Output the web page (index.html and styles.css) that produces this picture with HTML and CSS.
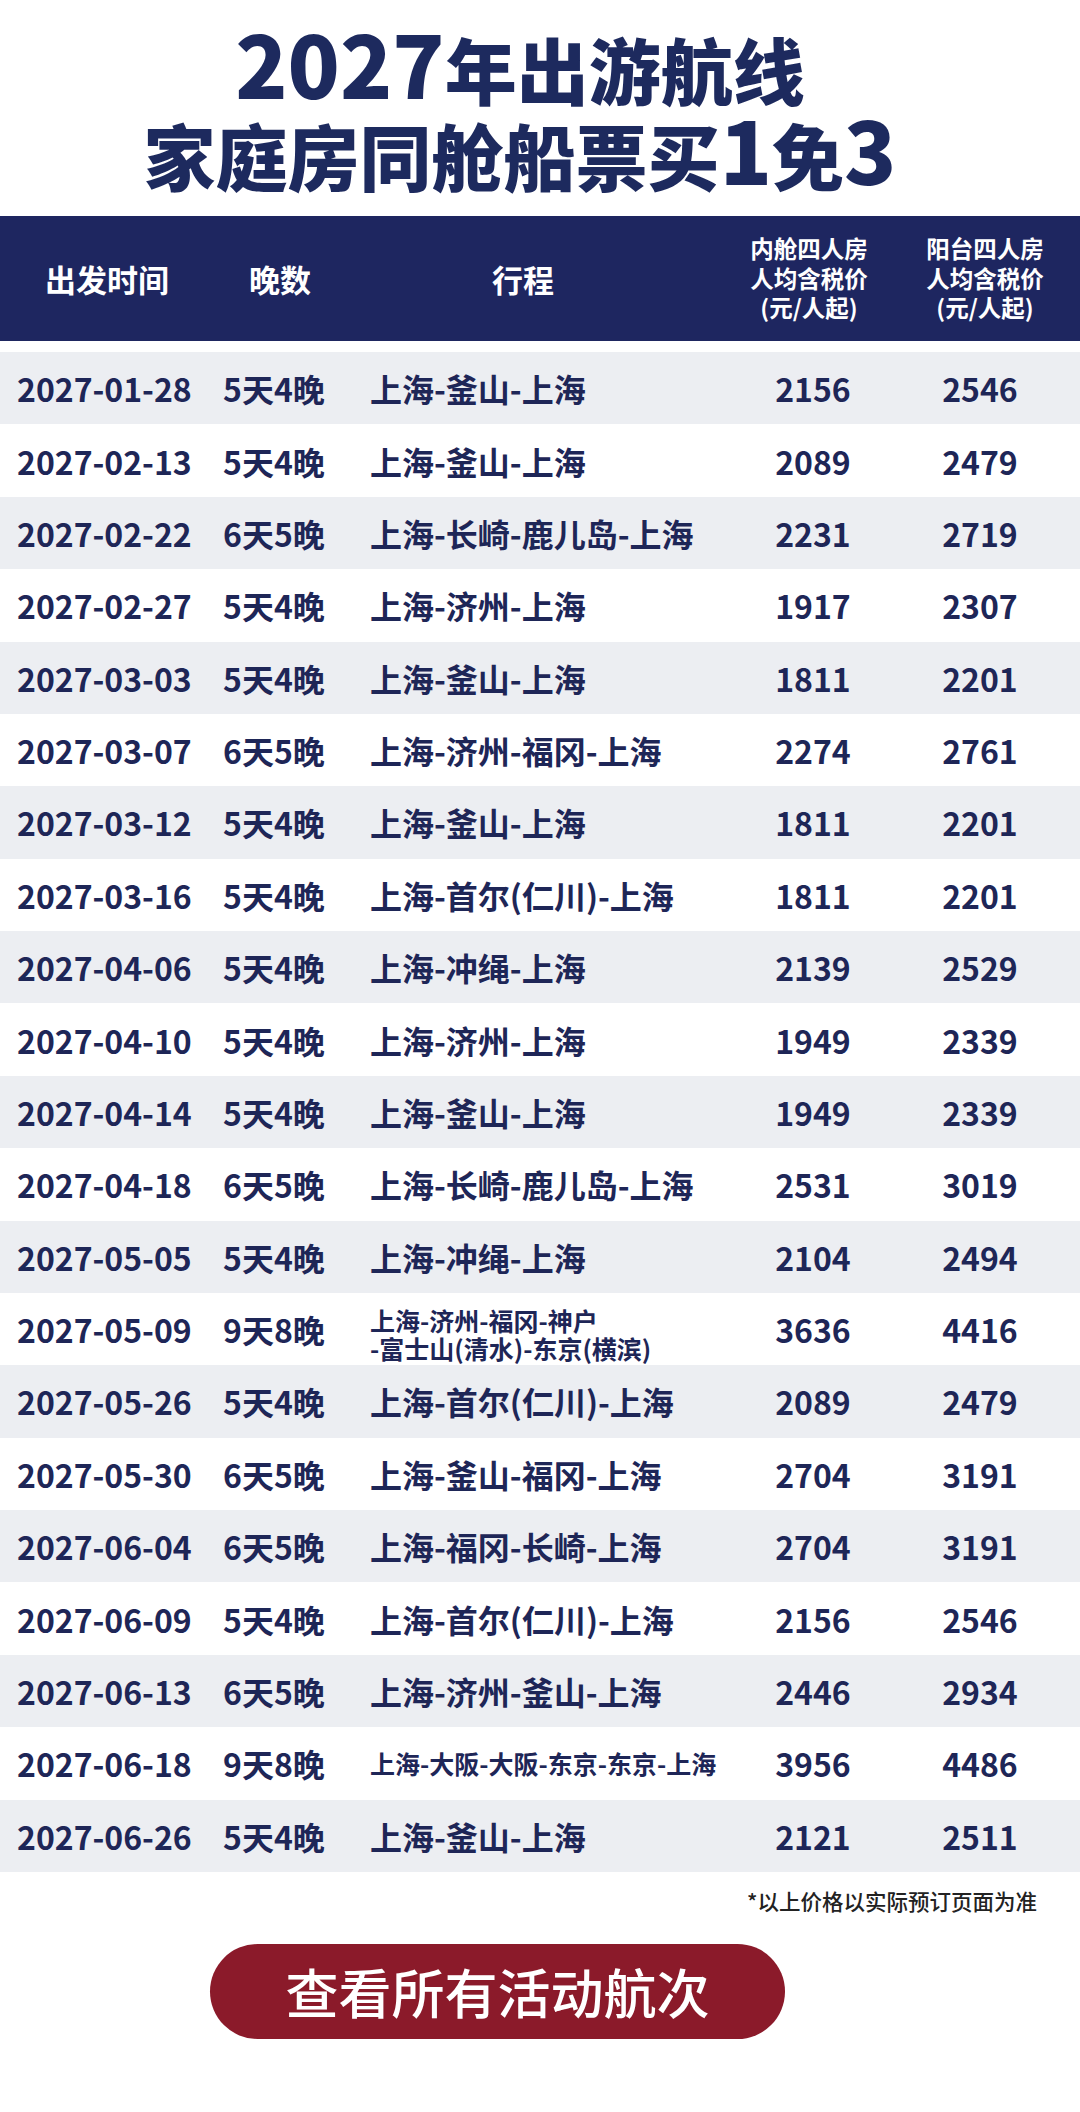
FILE: index.html
```html
<!DOCTYPE html>
<html lang="zh-CN">
<head>
<meta charset="utf-8">
<title>2027年出游航线</title>
<link rel="stylesheet" href="styles.css">
</head>
<body>
<div class="page">
  <h1 class="title">
    <span class="title-line"><span class="num">2027</span>年出游航线</span>
    <span class="title-line">家庭房同舱船票买<span class="num">1</span>免<span class="num">3</span></span>
  </h1>

  <div class="thead">
    <div class="th">出发时间</div>
    <div class="th">晚数</div>
    <div class="th">行程</div>
    <div class="th th-multi">内舱四人房<br>人均含税价<br>(元/人起)</div>
    <div class="th th-multi">阳台四人房<br>人均含税价<br>(元/人起)</div>
  </div>

  <div class="tbody">
    <div class="row"><div class="c-date">2027-01-28</div><div class="c-night">5天4晚</div><div class="c-route">上海-釜山-上海</div><div class="c-price">2156</div><div class="c-price">2546</div></div>
    <div class="row"><div class="c-date">2027-02-13</div><div class="c-night">5天4晚</div><div class="c-route">上海-釜山-上海</div><div class="c-price">2089</div><div class="c-price">2479</div></div>
    <div class="row"><div class="c-date">2027-02-22</div><div class="c-night">6天5晚</div><div class="c-route">上海-长崎-鹿儿岛-上海</div><div class="c-price">2231</div><div class="c-price">2719</div></div>
    <div class="row"><div class="c-date">2027-02-27</div><div class="c-night">5天4晚</div><div class="c-route">上海-济州-上海</div><div class="c-price">1917</div><div class="c-price">2307</div></div>
    <div class="row"><div class="c-date">2027-03-03</div><div class="c-night">5天4晚</div><div class="c-route">上海-釜山-上海</div><div class="c-price">1811</div><div class="c-price">2201</div></div>
    <div class="row"><div class="c-date">2027-03-07</div><div class="c-night">6天5晚</div><div class="c-route">上海-济州-福冈-上海</div><div class="c-price">2274</div><div class="c-price">2761</div></div>
    <div class="row"><div class="c-date">2027-03-12</div><div class="c-night">5天4晚</div><div class="c-route">上海-釜山-上海</div><div class="c-price">1811</div><div class="c-price">2201</div></div>
    <div class="row"><div class="c-date">2027-03-16</div><div class="c-night">5天4晚</div><div class="c-route">上海-首尔(仁川)-上海</div><div class="c-price">1811</div><div class="c-price">2201</div></div>
    <div class="row"><div class="c-date">2027-04-06</div><div class="c-night">5天4晚</div><div class="c-route">上海-冲绳-上海</div><div class="c-price">2139</div><div class="c-price">2529</div></div>
    <div class="row"><div class="c-date">2027-04-10</div><div class="c-night">5天4晚</div><div class="c-route">上海-济州-上海</div><div class="c-price">1949</div><div class="c-price">2339</div></div>
    <div class="row"><div class="c-date">2027-04-14</div><div class="c-night">5天4晚</div><div class="c-route">上海-釜山-上海</div><div class="c-price">1949</div><div class="c-price">2339</div></div>
    <div class="row"><div class="c-date">2027-04-18</div><div class="c-night">6天5晚</div><div class="c-route">上海-长崎-鹿儿岛-上海</div><div class="c-price">2531</div><div class="c-price">3019</div></div>
    <div class="row"><div class="c-date">2027-05-05</div><div class="c-night">5天4晚</div><div class="c-route">上海-冲绳-上海</div><div class="c-price">2104</div><div class="c-price">2494</div></div>
    <div class="row"><div class="c-date">2027-05-09</div><div class="c-night">9天8晚</div><div class="c-route c-small c-two">上海-济州-福冈-神户<br>-富士山(清水)-东京(横滨)</div><div class="c-price">3636</div><div class="c-price">4416</div></div>
    <div class="row"><div class="c-date">2027-05-26</div><div class="c-night">5天4晚</div><div class="c-route">上海-首尔(仁川)-上海</div><div class="c-price">2089</div><div class="c-price">2479</div></div>
    <div class="row"><div class="c-date">2027-05-30</div><div class="c-night">6天5晚</div><div class="c-route">上海-釜山-福冈-上海</div><div class="c-price">2704</div><div class="c-price">3191</div></div>
    <div class="row"><div class="c-date">2027-06-04</div><div class="c-night">6天5晚</div><div class="c-route">上海-福冈-长崎-上海</div><div class="c-price">2704</div><div class="c-price">3191</div></div>
    <div class="row"><div class="c-date">2027-06-09</div><div class="c-night">5天4晚</div><div class="c-route">上海-首尔(仁川)-上海</div><div class="c-price">2156</div><div class="c-price">2546</div></div>
    <div class="row"><div class="c-date">2027-06-13</div><div class="c-night">6天5晚</div><div class="c-route">上海-济州-釜山-上海</div><div class="c-price">2446</div><div class="c-price">2934</div></div>
    <div class="row"><div class="c-date">2027-06-18</div><div class="c-night">9天8晚</div><div class="c-route c-small">上海-大阪-大阪-东京-东京-上海</div><div class="c-price">3956</div><div class="c-price">4486</div></div>
    <div class="row"><div class="c-date">2027-06-26</div><div class="c-night">5天4晚</div><div class="c-route">上海-釜山-上海</div><div class="c-price">2121</div><div class="c-price">2511</div></div>
  </div>

  <p class="note">*以上价格以实际预订页面为准</p>

  <div class="btn-wrap">
    <a class="btn" href="#">查看所有活动航次</a>
  </div>
</div>
</body>
</html>
```

FILE: styles.css
```css
html, body {
  margin: 0;
  padding: 0;
  background: #ffffff;
}

body {
  font-family: "Noto Sans CJK SC", "Noto Sans", sans-serif;
  color: #1e2657;
}

.page {
  width: 1080px;
  height: 2112px;
  overflow: hidden;
}

.title {
  margin: 25px 0 19px 0;
  padding-right: 40px;
  display: flex;
  flex-direction: column;
  align-items: center;
  font-size: 72px;
  line-height: 86px;
  font-weight: 900;
  color: #1d2a5e;
}

.title-line {
  display: block;
  height: 86px;
  white-space: nowrap;
}

.num {
  font-size: 86px;
  line-height: 0;
}

.thead {
  height: 125px;
  background: #1e2660;
  display: grid;
  grid-template-columns: 214px 132px 354px 218px 134px;
  align-items: center;
  color: #ffffff;
}

.th {
  text-align: center;
  font-size: 31px;
  font-weight: 700;
  line-height: 40px;
}

.th-multi {
  font-size: 23.5px;
  line-height: 29.5px;
}

.tbody {
  margin-top: 11px;
}

.row {
  height: 72.38px;
  display: grid;
  grid-template-columns: 206px 147px 360px 166px 168px;
  padding-left: 17px;
  align-items: center;
  font-size: 32px;
  font-weight: 700;
  line-height: 40px;
  white-space: nowrap;
}

.row:nth-child(odd) {
  background: #eceef2;
}

.c-price {
  text-align: center;
}

.c-small {
  font-size: 25px;
  line-height: 28px;
}

.c-two {
  padding-top: 10px;
}

.note {
  margin: 14px 43px 0 0;
  text-align: right;
  font-size: 21.5px;
  line-height: 30px;
  font-weight: 500;
  color: #222222;
}

.btn-wrap {
  margin-top: 28px;
  padding-left: 210px;
  display: flex;
}

.btn {
  width: 575px;
  height: 95px;
  border-radius: 48px;
  background: #8b1a2a;
  color: #ffffff;
  text-decoration: none;
  display: flex;
  align-items: center;
  justify-content: center;
  font-size: 53px;
  font-weight: 500;
}
```
